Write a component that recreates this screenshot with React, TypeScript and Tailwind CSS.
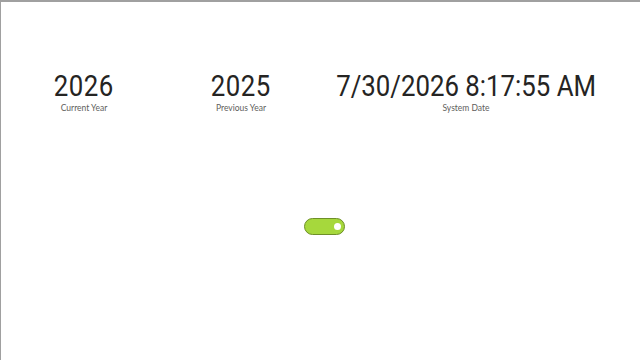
export default function App() {
  const cards = [
    { value: "2026", label: "Current Year", w: "w-[166px]", track: "tracking-[0.5px]" },
    { value: "2025", label: "Previous Year", w: "w-[148px]", track: "tracking-[0.5px]" },
    { value: "7/30/2026 8:17:55 AM", label: "System Date", w: "w-[302px]", track: "tracking-[0px]" },
  ];
  return (
    <div className="w-[640px] h-[360px] bg-white border-t-2 border-l border-[#a0a0a0] overflow-hidden">
      <div className="flex pt-[67px]">
        {cards.map((c) => (
          <div key={c.label} className={`${c.w} flex flex-col items-center`}>
            <span className={`${c.track} whitespace-nowrap scale-x-[0.86] text-[30px] leading-[34px] text-[#252423] font-['Roboto',sans-serif]`}>
              {c.value}
            </span>
            <span className="text-[8.5px] leading-[11px] text-[#605e5c] font-['Lato',sans-serif]">
              {c.label}
            </span>
          </div>
        ))}
      </div>
      <div className="flex justify-center pt-[104px] pl-[8px]">
        <div className="w-[41px] h-[17px] rounded-full bg-[#a6d83c] border border-[#6e8f28] flex items-center justify-end pr-[3px]">
          <span className="w-[7px] h-[7px] rounded-full bg-white" />
        </div>
      </div>
    </div>
  );
}
